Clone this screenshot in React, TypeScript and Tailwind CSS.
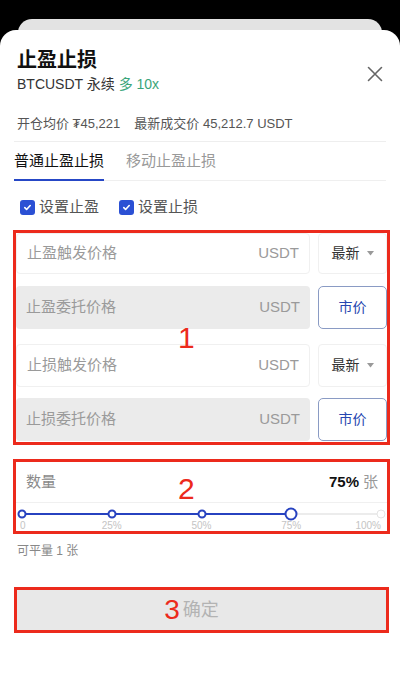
import React, { useState } from "react";

export default function App() {
  const [tab, setTab] = useState<number>(0);
  const [tp, setTp] = useState<boolean>(true);
  const [sl, setSl] = useState<boolean>(true);
  const percent = 75;

  const font = { fontFamily: '"Liberation Sans", "Noto Sans CJK SC", sans-serif' };

  const marks = [0, 25, 50, 75, 100];

  const Check = ({ on, onClick, label }: { on: boolean; onClick: () => void; label: string }) => (
    <button className="flex items-center gap-[4px]" onClick={onClick}>
      <span
        className={`flex h-[15px] w-[15px] items-center justify-center rounded-[3px] ${
          on ? "bg-[#2b50d4]" : "border border-[#bbb] bg-white"
        }`}
      >
        {on && (
          <svg width="9" height="9" viewBox="0 0 10 10" fill="none">
            <path d="M2 5.2l2 2 4-4.4" stroke="white" strokeWidth="1.8" strokeLinecap="round" strokeLinejoin="round" />
          </svg>
        )}
      </span>
      <span className="text-[15px] text-[#555]">{label}</span>
    </button>
  );

  const PriceInput = ({ label, filled }: { label: string; filled?: boolean }) => (
    <div
      className={`flex h-full w-[294px] items-center justify-between rounded-[4px] px-[10px] text-[15px] text-[#9a9a9a] ${
        filled ? "bg-[#ebebeb]" : "border border-[#f0f0f0] bg-white"
      }`}
    >
      <span>{label}</span>
      <span>USDT</span>
    </div>
  );

  const SelectBox = () => (
    <div className="flex h-full w-[69px] items-center justify-center gap-[7px] rounded-[4px] border border-[#f0f0f0] bg-white text-[14px] text-[#333]">
      <span>最新</span>
      <svg width="7" height="5" viewBox="0 0 7 5">
        <path d="M0 0h7L3.5 4.5z" fill="#999" />
      </svg>
    </div>
  );

  const MarketBtn = () => (
    <button className="flex h-full w-[69px] items-center justify-center rounded-[5px] border border-[#8a9bc4] bg-white text-[14px] text-[#2646b0]">
      市价
    </button>
  );

  return (
    <div className="flex h-[684px] w-[400px] flex-col overflow-hidden bg-black" style={font}>
      <div className="mx-[18px] mt-[19px] h-[26px] rounded-t-[14px] bg-[#e3e3e3]" />
      <div className="relative z-10 -mt-[15px] flex-1 rounded-t-[16px] bg-white">
        {/* header */}
        <div className="flex items-start justify-between px-[17px] pt-[16px]">
          <div>
            <div className="text-[20px] font-bold leading-[28px] text-[#111]">止盈止损</div>
            <div className="text-[14px] leading-[20px] text-[#333]">
              BTCUSDT 永续 <span className="text-[#3aa57a]">多 10x</span>
            </div>
          </div>
          <button className="mt-[20px]">
            <svg width="16" height="16" viewBox="0 0 16 16">
              <path d="M1.5 1.5l13 13M14.5 1.5l-13 13" stroke="#666" strokeWidth="1.6" strokeLinecap="round" />
            </svg>
          </button>
        </div>

        <div className="mt-[21px] px-[17px] text-[13px] leading-[18px] text-[#555]">
          开仓均价 ₮45,221<span className="ml-[14px]">最新成交价 45,212.7 USDT</span>
        </div>

        <div className="mx-[14px] mt-[8px] h-px bg-[#eeeeee]" />

        {/* tabs */}
        <div className="mx-[14px] mt-[8px] flex gap-[22px] border-b border-[#efefef]">
          {["普通止盈止损", "移动止盈止损"].map((t, i) => (
            <button
              key={t}
              onClick={() => setTab(i)}
              className={`-mb-px pb-[7px] text-[15px] leading-[22px] ${
                tab === i ? "border-b-2 border-[#2647c6] text-[#111]" : "border-b-2 border-transparent text-[#999]"
              }`}
            >
              {t}
            </button>
          ))}
        </div>

        {/* checkboxes */}
        <div className="ml-[20px] mt-[15px] flex gap-[20px] leading-[22px]">
          <Check on={tp} onClick={() => setTp(!tp)} label="设置止盈" />
          <Check on={sl} onClick={() => setSl(!sl)} label="设置止损" />
        </div>

        {/* box 1 */}
        <div className="relative ml-[13px] mr-[10px] mt-[12px] h-[215px] border-[3px] border-[#ec2a1c] bg-white">
          <div className="flex flex-col">
            <div className="flex h-[41px] justify-between">
              <PriceInput label="止盈触发价格" />
              <SelectBox />
            </div>
            <div className="mt-[12px] flex h-[43px] justify-between">
              <PriceInput label="止盈委托价格" filled />
              <MarketBtn />
            </div>
            <div className="mt-[15px] flex h-[43px] justify-between">
              <PriceInput label="止损触发价格" />
              <SelectBox />
            </div>
            <div className="mt-[11px] flex h-[43px] justify-between">
              <PriceInput label="止损委托价格" filled />
              <MarketBtn />
            </div>
          </div>
          <span className="absolute left-[162px] top-[88px] text-[30px] leading-[34px] text-[#ec2a1c]">1</span>
        </div>

        {/* box 2 */}
        <div className="relative ml-[13px] mr-[10px] mt-[14px] h-[75px] border-[3px] border-[#ec2a1c] bg-white">
          <div className="flex h-[41px] items-center justify-between border-b border-[#f0f0f0] pl-[10px] pr-[9px]">
            <span className="text-[15px] text-[#8a8a8a]">数量</span>
            <span className="text-[15px]">
              <span className="font-bold text-[#111]">{percent}%</span>
              <span className="ml-[4px] text-[#999]">张</span>
            </span>
          </div>
          <div className="relative mx-[6px] mt-[6px] h-[10px]">
            <div className="absolute left-0 right-0 top-[4px] h-[2px] bg-[#ececec]" />
            <div className="absolute left-0 top-[4px] h-[2px] bg-[#2742c0]" style={{ width: `${percent}%` }} />
            {marks.map((m) => {
              const active = m <= percent;
              const current = m === percent;
              return (
                <span
                  key={m}
                  className={`absolute top-1/2 -translate-x-1/2 -translate-y-1/2 rounded-full bg-white ${
                    current
                      ? "h-[13px] w-[13px] border-[2.5px] border-[#2742c0]"
                      : active
                      ? "h-[9px] w-[9px] border-2 border-[#2742c0]"
                      : "h-[9px] w-[9px] border border-[#e4e4e4]"
                  }`}
                  style={{ left: `${m}%` }}
                />
              );
            })}
          </div>
          <div className="relative mx-[6px] h-[13px] text-[10px] leading-[13px] text-[#c4c4c4]">
            {marks.map((m) => (
              <span
                key={m}
                className={`absolute top-0 ${m === 0 ? "-translate-x-[2px]" : m === 100 ? "-translate-x-full" : "-translate-x-1/2"}`}
                style={{ left: `${m}%` }}
              >
                {m === 0 ? "0" : `${m}%`}
              </span>
            ))}
          </div>
          <span className="absolute left-[162px] top-[10px] text-[30px] leading-[34px] text-[#ec2a1c]">2</span>
        </div>

        <div className="ml-[17px] mt-[9px] text-[12px] leading-[17px] text-[#888]">可平量 1 张</div>

        {/* box 3 */}
        <div className="ml-[14px] mr-[11px] mt-[27px] flex h-[46px] items-center justify-center border-[3px] border-[#ec2a1c] bg-[#e8e8e8] pr-[20px]">
          <span className="mr-[3px] text-[28px] leading-[30px] text-[#ec2a1c]">3</span>
          <span className="text-[18px] text-[#b3b3b3]">确定</span>
        </div>
      </div>
    </div>
  );
}
